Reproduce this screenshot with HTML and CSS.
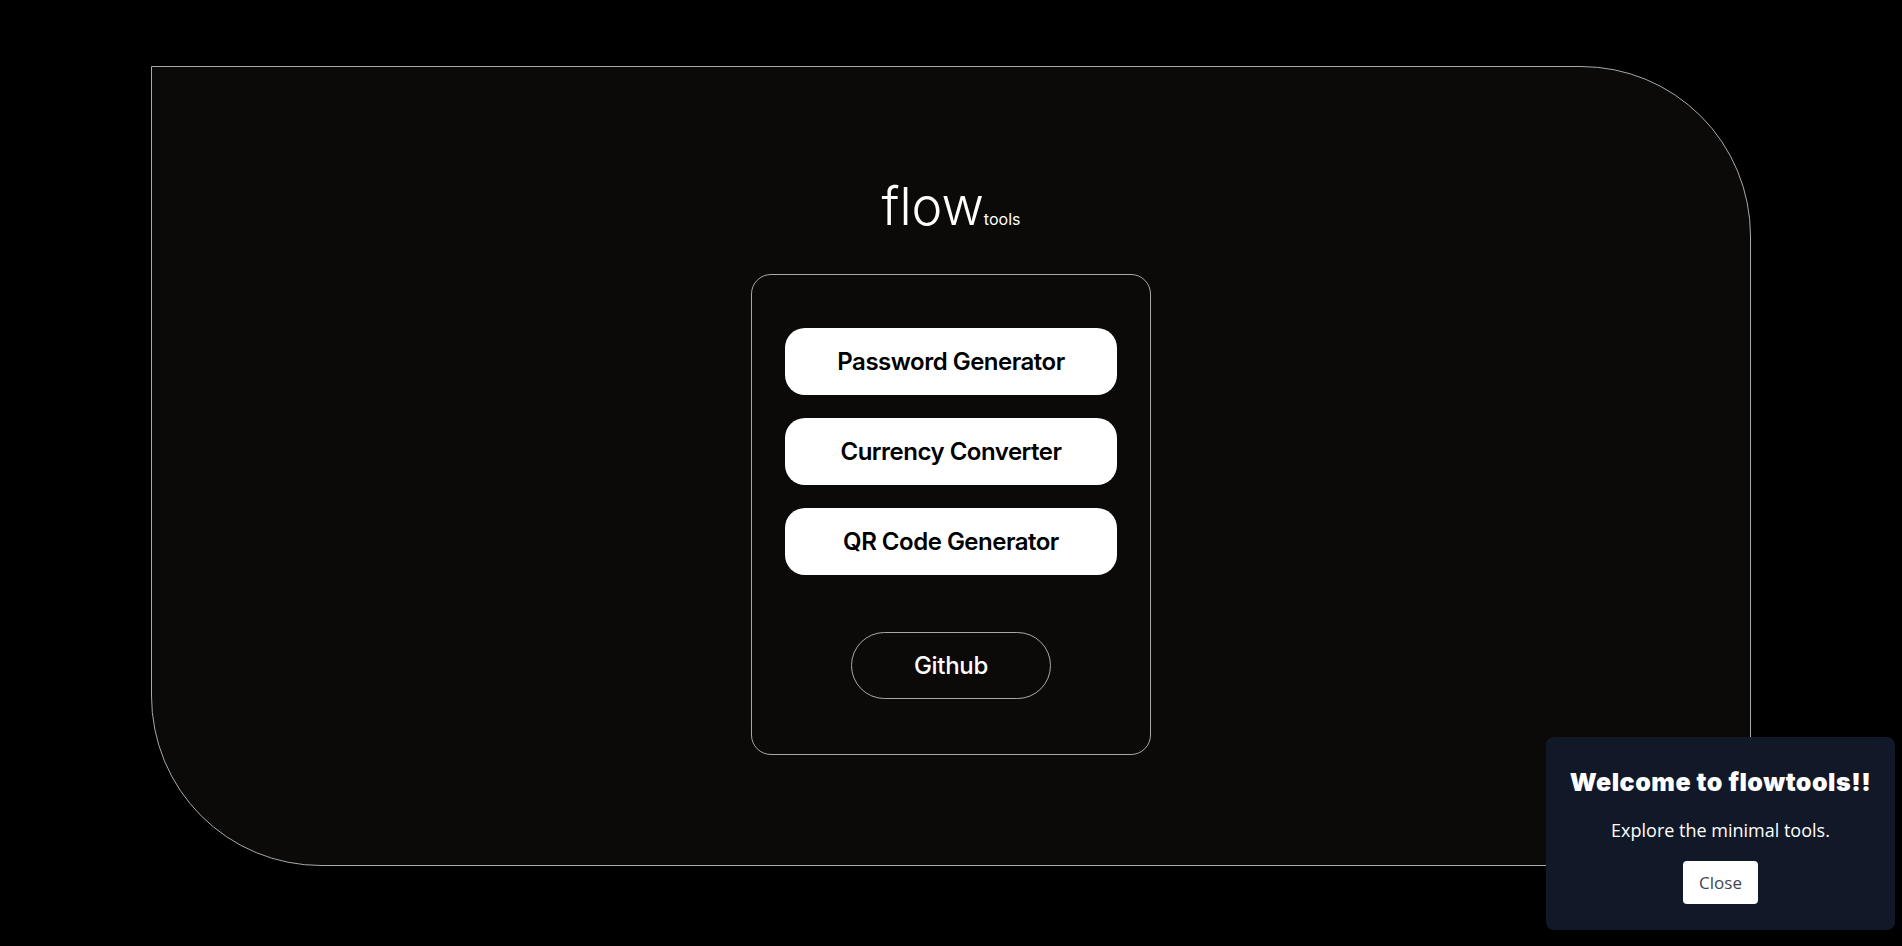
FILE: index.html
```html
<!DOCTYPE html>
<html lang="en">
<head>
<meta charset="utf-8">
<title>flowtools</title>
<link rel="stylesheet" href="styles.css">
</head>
<body>
<main class="frame">
  <h1 class="brand">flow<span class="brand-sub">tools</span></h1>
  <section class="card">
    <div class="tool-list">
      <a class="tool-btn" href="#">Password Generator</a>
      <a class="tool-btn" href="#">Currency Converter</a>
      <a class="tool-btn" href="#">QR Code Generator</a>
    </div>
    <a class="github-btn" href="#">Github</a>
  </section>
</main>
<aside class="toast">
  <h2 class="toast-title">Welcome to flowtools!!</h2>
  <p class="toast-text">Explore the minimal tools.</p>
  <button class="toast-close" type="button">Close</button>
</aside>
</body>
</html>
```
FILE: styles.css
```css
* { box-sizing: border-box; }
html, body { margin: 0; padding: 0; }
body {
  background: #000;
  height: 946px;
  overflow: hidden;
  font-family: "Inter", "Liberation Sans", sans-serif;
  color: #fff;
  padding-top: 66px;
}
.frame {
  width: 1600px;
  height: 800px;
  margin: 0 auto;
  background: #0b0a09;
  border: 1px solid #a8a8a8;
  border-radius: 0 170px 0 170px;
  display: flex;
  flex-direction: column;
  align-items: center;
  justify-content: center;
}
.brand {
  margin: 3px 0 29px;
  font-size: 52px;
  line-height: 52px;
  font-weight: 300;
  color: #fff;
}
.brand-sub {
  font-size: 16px;
  font-weight: 400;
}
.card {
  width: 400px;
  height: 481px;
  border: 1px solid #a8a8a8;
  border-radius: 20px;
  padding: 53px 0 53px;
  display: flex;
  flex-direction: column;
  align-items: center;
}
.tool-list {
  display: flex;
  flex-direction: column;
  gap: 23px;
}
.tool-btn {
  display: flex;
  align-items: center;
  justify-content: center;
  width: 332px;
  height: 67px;
  background: #fff;
  color: #000;
  border-radius: 20px;
  font-size: 24px;
  font-weight: 600;
  letter-spacing: -0.5px;
  text-decoration: none;
}
.github-btn {
  margin-top: 57px;
  display: flex;
  align-items: center;
  justify-content: center;
  width: 200px;
  height: 67px;
  border: 1px solid #a8a8a8;
  border-radius: 34px;
  color: #fff;
  font-size: 24px;
  font-weight: 500;
  letter-spacing: -0.3px;
  text-decoration: none;
}
.toast {
  position: fixed;
  right: 7px;
  bottom: 16px;
  width: 349px;
  height: 193px;
  background: #111827;
  border-radius: 8px;
  padding-top: 29px;
  display: flex;
  flex-direction: column;
  align-items: center;
  font-family: "Open Sans", "Noto Sans", sans-serif;
}
.toast-title {
  margin: 0;
  font-family: "Inter", "Noto Sans", sans-serif;
  font-weight: 900;
  font-size: 25px;
  letter-spacing: 0.5px;
  line-height: 32px;
  color: #fff;
}
.toast-text {
  margin: 20px 0 0;
  font-size: 18px;
  line-height: 24px;
  color: #fff;
}
.toast-close {
  margin-top: 19px;
  width: 75px;
  height: 43px;
  border: 0;
  border-radius: 4px;
  background: #fff;
  color: #404651;
  font-family: "Open Sans", "Noto Sans", sans-serif;
  font-size: 17px;
  font-weight: 400;
  padding: 0;
}
```
